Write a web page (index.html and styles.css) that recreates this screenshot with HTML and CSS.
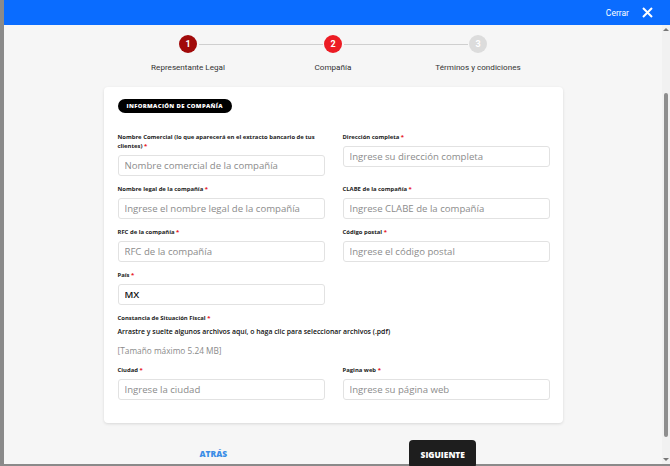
FILE: index.html
```html
<!DOCTYPE html>
<html lang="es">
    <head>
        <meta charset="utf-8">
        <title>Registro de compañía</title>
        <link rel="stylesheet" href="styles.css">
    </head>
    <body class="body">
        <div class="modal">
            <header class="topbar">
                <span class="close-text">Cerrar</span>
                <svg class="close-icon" width="11" height="11" viewBox="0 0 11 11">
                    <path d="M1 1 L10 10 M10 1 L1 10" stroke="#fff" stroke-width="2" fill="none"/>
                </svg>
            </header>
            <div class="modal-body">
                <main class="content">
                    <ol class="stepper">
                        <li class="step done"><span class="dot">1</span><span class="step-label">Representante Legal</span></li>
                        <li class="step active"><span class="dot">2</span><span class="step-label">Compañía</span></li>
                        <li class="step"><span class="dot">3</span><span class="step-label">Términos y condiciones</span></li>
                    </ol>

                    <section class="card">
                        <div class="badge">Información de compañía</div>
                        <form class="form-grid">
                            <div class="field">
                                <label>Nombre Comercial (lo que aparecerá en el extracto bancario de tus clientes) <b>*</b></label>
                                <input type="text" placeholder="Nombre comercial de la compañía">
                            </div>
                            <div class="field">
                                <label>Dirección completa <b>*</b></label>
                                <input type="text" placeholder="Ingrese su dirección completa">
                            </div>
                            <div class="field">
                                <label>Nombre legal de la compañía <b>*</b></label>
                                <input type="text" placeholder="Ingrese el nombre legal de la compañía">
                            </div>
                            <div class="field">
                                <label>CLABE de la compañía <b>*</b></label>
                                <input type="text" placeholder="Ingrese CLABE de la compañía">
                            </div>
                            <div class="field">
                                <label>RFC de la compañía <b>*</b></label>
                                <input type="text" placeholder="RFC de la compañía">
                            </div>
                            <div class="field">
                                <label>Código postal <b>*</b></label>
                                <input type="text" placeholder="Ingrese el código postal">
                            </div>
                            <div class="field">
                                <label>País <b>*</b></label>
                                <input type="text" class="filled" value="MX">
                            </div>
                            <div class="field"></div>
                            <div class="field wide">
                                <label>Constancia de Situación Fiscal <b>*</b></label>
                                <div class="dropzone">Arrastre y suelte algunos archivos aquí, o haga clic para seleccionar archivos (.pdf)</div>
                                <div class="maxsize">[Tamaño máximo 5.24 MB]</div>
                            </div>
                            <div class="field">
                                <label>Ciudad <b>*</b></label>
                                <input type="text" placeholder="Ingrese la ciudad">
                            </div>
                            <div class="field">
                                <label>Pagina web <b>*</b></label>
                                <input type="text" placeholder="Ingrese su página web">
                            </div>
                        </form>
                    </section>

                    <div class="actions">
                        <button class="btn-back" type="button">Atrás</button>
                        <button class="btn-next" type="button">Siguiente</button>
                    </div>
                </main>
                <div class="scrollbar">
                    <span class="arrow up"></span>
                    <div class="track"><div class="thumb"></div></div>
                    <span class="arrow down"></span>
                </div>
            </div>
        </div>
    </body>
</html>
```

FILE: styles.css
```css
.body{
    margin:0;
    height:466px;
    overflow:hidden;
    background-color:#8a8a8a;
    font-family:"Open Sans","Noto Sans",sans-serif;
}

.modal{
    margin-left:4px;
    height:464px;
    display:flex;
    flex-direction:column;
    background-color:#f6f6f6;
}

.topbar{
    height:25px;
    flex:none;
    background-color:#0a6cff;
    display:flex;
    align-items:center;
    justify-content:flex-end;
    padding-right:17px;
    gap:13px;
}
.close-text{
    color:#fff;
    font-family:Roboto,sans-serif;
    font-size:8.5px;
}
.close-icon{
    display:block;
}

.modal-body{
    flex:1;
    display:flex;
    min-height:0;
}
.content{
    flex:1;
    display:flex;
    flex-direction:column;
    align-items:center;
}

/* stepper */
.stepper{
    list-style:none;
    margin:10px 0 0 0;
    padding:0;
    display:flex;
}
.step{
    width:145px;
    display:flex;
    flex-direction:column;
    align-items:center;
    position:relative;
}
.step + .step::before{
    content:"";
    position:absolute;
    top:9px;
    left:-62px;
    width:124px;
    height:1px;
    background-color:#cfcfcf;
}
.dot{
    width:18px;
    height:18px;
    border-radius:50%;
    background-color:#dcdcdc;
    color:#fff;
    font-family:Roboto,sans-serif;
    font-weight:bold;
    font-size:9px;
    display:flex;
    align-items:center;
    justify-content:center;
}
.done .dot{
    background-color:#a10a0a;
}
.active .dot{
    background-color:#ec1c24;
}
.step-label{
    margin-top:9px;
    font-family:Roboto,sans-serif;
    font-size:8.1px;
    line-height:10px;
    color:#333;
}

/* card */
.card{
    margin-top:15px;
    width:459px;
    box-sizing:border-box;
    padding:12px 13px 23px 14px;
    background-color:#fff;
    border-radius:4px;
    box-shadow:0 1px 3px rgba(0,0,0,0.12);
}
.badge{
    width:fit-content;
    height:14px;
    line-height:14px;
    padding:0 9px;
    border-radius:7px;
    background-color:#000;
    color:#fff;
    font-size:5.9px;
    font-weight:800;
    letter-spacing:0.35px;
    text-transform:uppercase;
}
.form-grid{
    margin-top:20px;
    display:grid;
    grid-template-columns:207px 207px;
    column-gap:18px;
    row-gap:9px;
}
.field{
    display:flex;
    flex-direction:column;
}
.wide{
    grid-column:1 / 3;
}
.field label{
    font-size:5.9px;
    line-height:9px;
    font-weight:700;
    color:#222;
    margin-bottom:4px;
}
.field label b{
    color:#e8232b;
}
.field input{
    height:21px;
    box-sizing:border-box;
    border:1px solid #e2e2e2;
    border-radius:3px;
    padding:0 6px;
    font-family:"Open Sans","Noto Sans",sans-serif;
    font-size:9.6px;
    color:#222;
    outline:none;
}
.field input::placeholder{
    color:#8c8c8c;
}
.field .filled{
    font-weight:600;
    color:#111;
}
.dropzone{
    font-size:6.9px;
    line-height:9px;
    font-weight:600;
    color:#111;
}
.maxsize{
    margin-top:9px;
    font-size:8.3px;
    line-height:12px;
    color:#8a8a8a;
}

/* buttons */
.actions{
    margin-top:17px;
    width:459px;
    display:grid;
    grid-template-columns:1fr 1fr;
}
.actions button{
    justify-self:center;
    margin-right:10px;
    border:none;
    font-family:"Open Sans","Noto Sans",sans-serif;
    font-weight:800;
    font-size:8.4px;
    text-transform:uppercase;
    cursor:pointer;
}
.btn-back{
    background:none;
    color:#3b8de6;
    height:26px;
}
.btn-next{
    width:67px;
    height:28px;
    border-radius:4px;
    background-color:#1e1e1e;
    color:#fff;
}

/* scrollbar */
.scrollbar{
    width:8px;
    flex:none;
    display:flex;
    flex-direction:column;
    align-items:center;
    background-color:#f1f1f1;
}
.arrow{
    width:0;
    height:0;
    border-left:3px solid transparent;
    border-right:3px solid transparent;
    margin:3px 0;
}
.up{
    border-bottom:3px solid #777;
}
.down{
    border-top:3px solid #777;
}
.track{
    flex:1;
    width:100%;
    display:flex;
    justify-content:center;
    padding:59px 0 18px 0;
    box-sizing:border-box;
}
.thumb{
    width:4px;
    border-radius:2px;
    background-color:#8e8e8e;
}
```
